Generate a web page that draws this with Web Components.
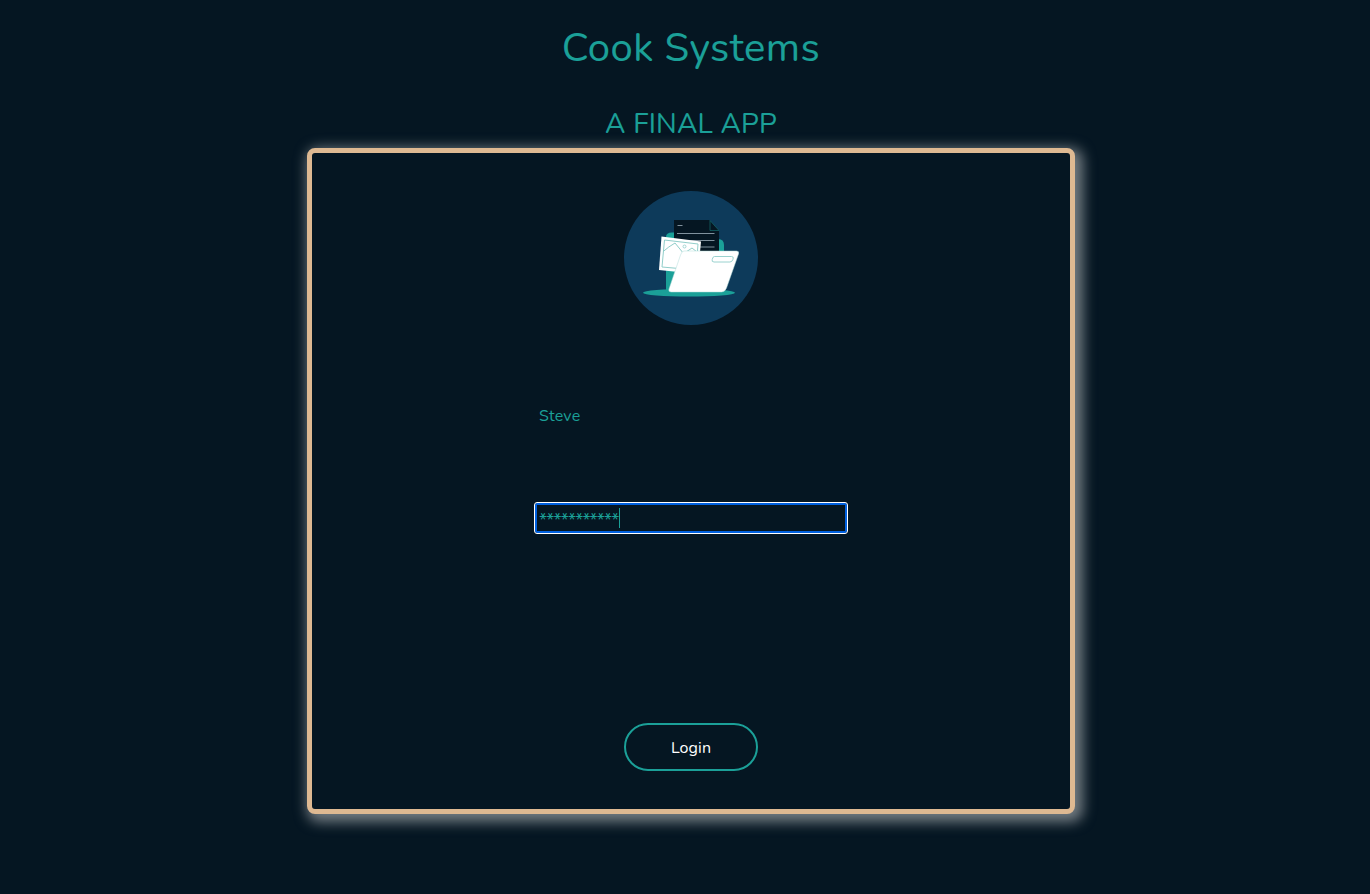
<!DOCTYPE html>
<html lang="en">
<head>
<meta charset="utf-8">
<title>Cook Systems</title>
<style>
html,body{margin:0;height:100%;background:#051622;overflow:hidden}
body{font-family:Nunito,Lato,sans-serif;color:#1ba098}
</style>
</head>
<body>
<login-page></login-page>
<script>
const define=(name,html)=>customElements.define(name,class extends HTMLElement{
  constructor(){super();this.attachShadow({mode:'open'}).innerHTML=html}
});
define('folder-logo',`<style>:host{display:block;width:134px;height:134px}svg{display:block}</style>
<svg width="134" height="134" viewBox="0 0 134 134" fill="none">
<circle cx="67" cy="67" r="67" fill="#0d3a5a"/>
<ellipse cx="65" cy="101.8" rx="46" ry="3.8" fill="#1ba098"/>
<path d="M42 101V46q0-4.500 6-4.500h7V48h39q6 0 6 6v41l-20 6z" fill="#1ba098"/>
<path d="M50 29h35.500l9.500 10.500V68H50z" fill="#051622"/>
<path d="M86 29.500v10h9z" fill="#051622" stroke="#146a6c" stroke-width=".7"/>
<path d="M53.500 34.500h5M53 42.500h37.500M53 49.500h37.500M53 56h37.500" stroke="#8e9fac" stroke-width=".9"/>
<path d="M37.500 45.500 77 50.500 74 83 35 79z" fill="#fff"/>
<path d="M40.500 49 74 53 72 79 38 76zM39.800 60l5-4 6.200-4 9 11M62 61l6-4 5 4" stroke="#91ceca" stroke-width="1"/>
<circle cx="60.500" cy="55.500" r="1.500" stroke="#91ceca" stroke-width=".8"/>
<path d="M60 60h52.500q3 0 2 3l-12 34q-1.500 4-5 4H47q-3 0-2-3l11.500-34q1.300-4 3.500-4z" fill="#fff" stroke="#b3dcda" stroke-width=".5"/>
<path d="M90.500 65.500h17q2.500 0 1.600 2.500l-.2.500q-.8 2.500-3 2.500H90q-2.500 0-1.800-2.500.5-3 2.300-3z" stroke="#8fcdca" stroke-width=".9"/>
</svg>`);
define('text-field',`<style>
:host{display:flex;align-items:center;box-sizing:border-box;width:314px;height:32px;padding:0 5px;font-size:16px;line-height:24px;border-radius:3px}
:host([focused]){border:1px solid #fff;box-shadow:inset 0 0 0 2px #0060df;padding:0 4px}
:host([focused]) span{padding-top:4px;font-size:18px}
span{letter-spacing:var(--track,.2px)}
i{display:none;width:1px;height:20px;background:#1ba098}
:host([focused]) i{display:block}
</style><span><slot></slot></span><i></i>`);
define('pill-button',`<style>
:host{display:block}
button{display:block;box-sizing:border-box;width:134px;height:48px;border:2px solid #1ba098;border-radius:24px;background:transparent;color:#fff;font:16px/24px Nunito,Lato,sans-serif;letter-spacing:.1px;padding:1px 0 0}
</style><button><slot></slot></button>`);
define('login-card',`<style>
:host{display:flex;flex-direction:column;align-items:center;box-sizing:border-box;width:768px;height:666px;padding-top:38px;border:5px solid #deb992;border-radius:8px;background:#051622;box-shadow:4px 4px 13px 4px #747d83}
.user{margin-top:75px}
.pass{margin-top:70px;--track:-.87px}
pill-button{margin-top:189px}
</style>
<folder-logo></folder-logo>
<text-field class="user">Steve</text-field>
<text-field class="pass" focused>***********</text-field>
<pill-button>Login</pill-button>`);
define('login-page',`<style>
:host{display:flex;flex-direction:column;align-items:center;width:1382px;height:894px}
h1,h2{margin:0;font-weight:400;white-space:nowrap;-webkit-text-stroke:.12px #1ba098}
h1{font-size:40px;line-height:48px;margin-top:24px;letter-spacing:.5px}
h2{font-size:28px;line-height:34px;margin-top:35px;margin-bottom:7px;letter-spacing:.2px}
</style>
<h1>Cook Systems</h1><h2>A FINAL APP</h2><login-card></login-card>`);
</script>
</body>
</html>
